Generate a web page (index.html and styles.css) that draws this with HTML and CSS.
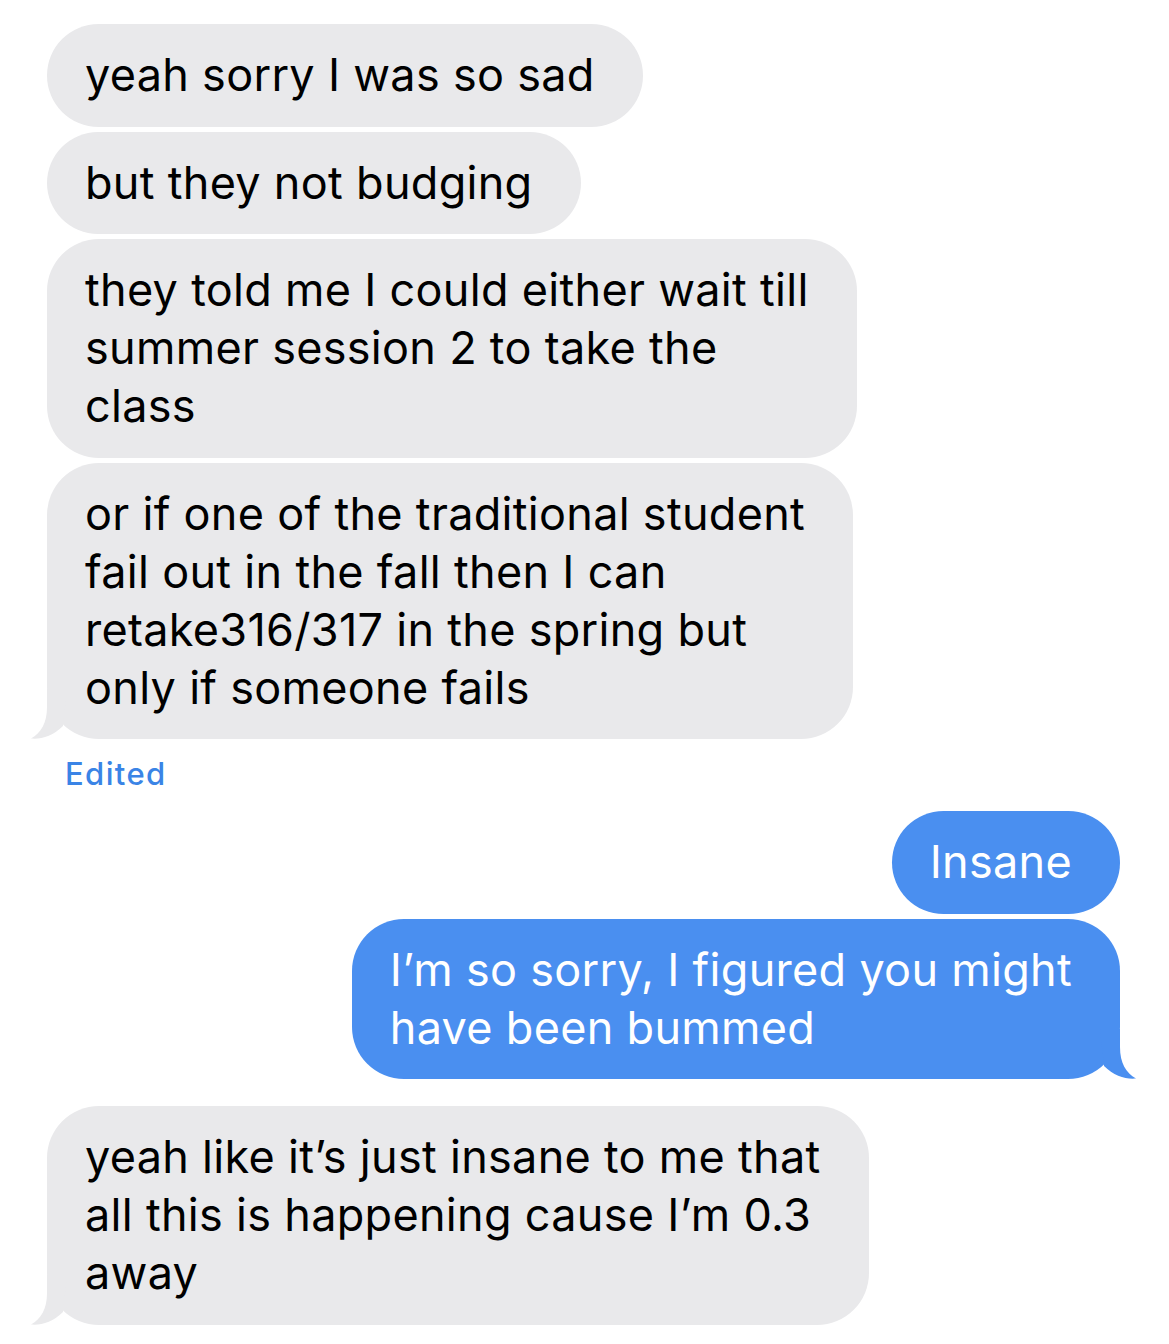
FILE: index.html
```html
<!DOCTYPE html>
<html lang="en">
<head>
<meta charset="utf-8">
<title>Messages</title>
<link rel="stylesheet" href="styles.css">
</head>
<body>
<main class="thread">
  <div class="row in"><div class="bubble gray">yeah sorry I was so sad</div></div>
  <div class="row in"><div class="bubble gray">but they not budging</div></div>
  <div class="row in"><div class="bubble gray">they told me I could either wait till<br>summer session 2 to take the<br>class</div></div>
  <div class="row in"><div class="bubble gray">or if one of the traditional student<br>fail out in the fall then I can<br>retake316/317 in the spring but<br>only if someone fails<svg class="tail tail-in" viewBox="0 0 60 50" width="60" height="50" aria-hidden="true"><path d="M20 0 L20 18 C20 34 14 44 4 49.5 C14 50.5 26 47 36 37 L40 0 Z"/></svg></div></div>
  <div class="edited">Edited</div>
  <div class="row out"><div class="bubble blue">Insane</div></div>
  <div class="row out"><div class="bubble blue">I’m so sorry, I figured you might<br>have been bummed<svg class="tail tail-out" viewBox="0 0 60 50" width="60" height="50" aria-hidden="true"><path d="M20 0 L20 18 C20 34 14 44 4 49.5 C14 50.5 26 47 36 37 L40 0 Z"/></svg></div></div>
  <div class="row in gap-lg"><div class="bubble gray">yeah like it’s just insane to me that<br>all this is happening cause I’m 0.3<br>away<svg class="tail tail-in" viewBox="0 0 60 50" width="60" height="50" aria-hidden="true"><path d="M20 0 L20 18 C20 34 14 44 4 49.5 C14 50.5 26 47 36 37 L40 0 Z"/></svg></div></div>
</main>
</body>
</html>
```
FILE: styles.css
```css
html, body {
  margin: 0;
  background: #ffffff;
}
body {
  font-family: Inter, "Noto Sans", "Liberation Sans", sans-serif;
}
.thread {
  display: flex;
  flex-direction: column;
  gap: 5px;
  padding: 24px 49px 18px 47px;
}
.row {
  display: flex;
}
.row.in { justify-content: flex-start; }
.row.out { justify-content: flex-end; }
.row.gap-lg { margin-top: 22px; }
.bubble {
  position: relative;
  padding: 22px 48px 22.5px 38px;
  border-radius: 52px;
  font-size: 45px;
  line-height: 58px;
  letter-spacing: 0.3px;
  white-space: nowrap;
}
.gray {
  background: #e9e9eb;
  color: #000;
}
.blue {
  background: #4a8ff0;
  color: #fff;
}
.tail {
  position: absolute;
  bottom: 0;
  width: 60px;
  height: 50px;
  display: block;
}
.gray .tail { fill: #e9e9eb; }
.blue .tail { fill: #4a8ff0; }
.tail-in { left: -20px; }
.tail-out { right: -20px; transform: scaleX(-1); }
.edited {
  font-size: 31px;
  line-height: 36px;
  font-weight: 500;
  letter-spacing: 1.4px;
  color: #3a84e6;
  padding-left: 18px;
  margin-top: 12px;
  margin-bottom: 14px;
}
```
